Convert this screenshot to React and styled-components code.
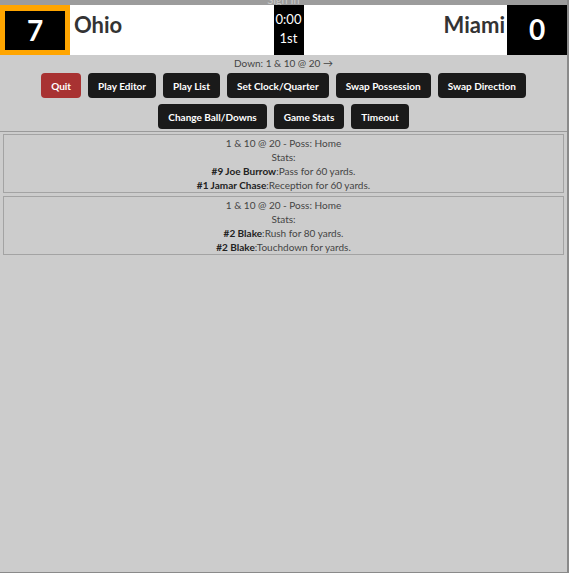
import React from "react";
import styled, { createGlobalStyle } from "styled-components";

const GlobalStyle = createGlobalStyle`
  html, body {
    margin: 0;
    padding: 0;
    background: #cccccc;
  }
  body {
    font-family: Lato, "Open Sans", sans-serif;
  }
`;

const Page = styled.div`
  box-sizing: border-box;
  min-height: 100vh;
  background: #cccccc;
  border-right: 2px solid #8a8a8a;
  border-bottom: 1px solid #8a8a8a;
  display: flex;
  flex-direction: column;
`;

const TopStrip = styled.div`
  height: 5px;
  background: #9c9c9c;
  overflow: hidden;
  display: flex;
  justify-content: center;
`;

const SignIn = styled.span`
  font-size: 11px;
  line-height: 1;
  margin-top: -6px;
  color: #c8c8c8;
`;

const Scoreboard = styled.div`
  display: flex;
  height: 50px;
  background: #ffffff;
`;

const ScoreBox = styled.div`
  box-sizing: border-box;
  width: 60px;
  flex: none;
  background: #000;
  color: #fff;
  font-weight: 700;
  font-size: 28px;
  display: flex;
  align-items: center;
  justify-content: center;
  padding-bottom: 2px;
  ${(p) => (p.$active ? "border: 5px solid #ffa500; border-top-width: 6px; width: 70px;" : "")}
`;

const TeamName = styled.div`
  flex: 1;
  display: flex;
  align-items: center;
  justify-content: ${(p) => (p.$right ? "flex-end" : "flex-start")};
  padding: 0 2px 12px 4px;
  font-size: 22px;
  font-weight: 700;
  color: #333;
`;

const Clock = styled.div`
  width: 30px;
  flex: none;
  background: #000;
  color: #fff;
  font-size: 13px;
  display: flex;
  flex-direction: column;
  align-items: center;
  justify-content: center;
  line-height: 19px;
  padding-bottom: 3px;
`;

const DownLine = styled.div`
  text-align: center;
  font-size: 10px;
  color: #444;
  margin-top: 1px;
  line-height: 14px;
`;

const Controls = styled.div`
  display: flex;
  flex-direction: column;
  gap: 6px;
  padding: 3px 0 2px;
`;

const ButtonRow = styled.div`
  display: flex;
  justify-content: center;
  gap: 7px;
`;

const Btn = styled.button`
  height: 25px;
  padding: 0 10px;
  border: none;
  border-radius: 4px;
  background: ${(p) => (p.$danger ? "#a83232" : "#1a1a1a")};
  color: #fff;
  font-family: Lato, sans-serif;
  font-weight: 700;
  font-size: 10px;
  cursor: pointer;
`;

const PlayList = styled.div`
  border-top: 1px solid #9a9a9a;
  padding: 2px 3px;
  display: flex;
  flex-direction: column;
  gap: 3px;
`;

const PlayCard = styled.div`
  border: 1px solid #a3a3a3;
  text-align: center;
  font-size: 10px;
  color: #444;
  line-height: 14px;
  padding: 1px 0 0;
`;

const Player = styled.b`
  color: #222;
`;

const plays = [
  {
    header: "1 & 10 @ 20 - Poss: Home",
    stats: [
      { player: "#9 Joe Burrow", text: "Pass for 60 yards." },
      { player: "#1 Jamar Chase", text: "Reception for 60 yards." },
    ],
  },
  {
    header: "1 & 10 @ 20 - Poss: Home",
    stats: [
      { player: "#2 Blake", text: "Rush for 80 yards." },
      { player: "#2 Blake", text: "Touchdown for yards." },
    ],
  },
];

const buttonRows = [
  ["Quit", "Play Editor", "Play List", "Set Clock/Quarter", "Swap Possession", "Swap Direction"],
  ["Change Ball/Downs", "Game Stats", "Timeout"],
];

export default function App() {
  return (
    <Page>
      <GlobalStyle />
      <TopStrip>
        <SignIn>Sign In</SignIn>
      </TopStrip>
      <Scoreboard>
        <ScoreBox $active>7</ScoreBox>
        <TeamName>Ohio</TeamName>
        <Clock>
          <span>0:00</span>
          <span>1st</span>
        </Clock>
        <TeamName $right>Miami</TeamName>
        <ScoreBox>0</ScoreBox>
      </Scoreboard>
      <DownLine>Down: 1 &amp; 10 @ 20 →</DownLine>
      <Controls>
        {buttonRows.map((row, i) => (
          <ButtonRow key={i}>
            {row.map((b) => (
              <Btn key={b} $danger={b === "Quit"}>
                {b}
              </Btn>
            ))}
          </ButtonRow>
        ))}
      </Controls>
      <PlayList>
        {plays.map((p, i) => (
          <PlayCard key={i}>
            <div>{p.header}</div>
            <div>Stats:</div>
            {p.stats.map((s, j) => (
              <div key={j}>
                <Player>{s.player}</Player>:{s.text}
              </div>
            ))}
          </PlayCard>
        ))}
      </PlayList>
    </Page>
  );
}
